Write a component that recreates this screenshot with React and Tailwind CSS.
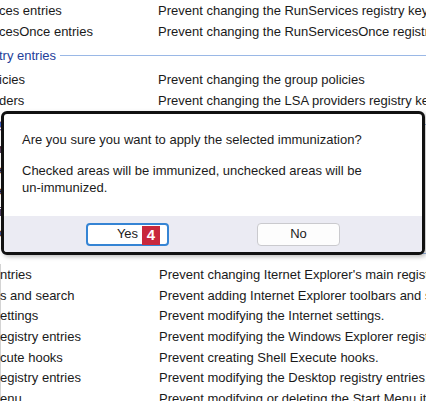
import React from "react";

const top = [
  ["ces entries", "Prevent changing the RunServices registry key"],
  ["cesOnce entries", "Prevent changing the RunServicesOnce registry key"],
];

const mid = [
  ["icies", "Prevent changing the group policies"],
  ["ders", "Prevent changing the LSA providers registry key"],
];

const hidden = [
  ["rs", "Prevent changing the Winlogon registry key"],
  ["es", "Prevent changing the Shell registry key"],
  ["ers", "Prevent changing the Userinit registry key"],
  ["ies", "Prevent changing the AppInit registry key"],
  ["ons", "Prevent changing the file associations"],
];

const bottom = [
  ["ntries", "Prevent changing Iternet Explorer's main registry entries"],
  ["s and search", "Prevent adding Internet Explorer toolbars and search providers"],
  ["ettings", "Prevent modifying the Internet settings."],
  ["egistry entries", "Prevent modifying the Windows Explorer registry entries."],
  ["cute hooks", "Prevent creating Shell Execute hooks."],
  ["egistry entries", "Prevent modifying the Desktop registry entries."],
  ["enu", "Prevent modifying or deleting the Start Menu items."],
];

function Row({ left, right, h = "h-[21px]" }) {
  return (
    <div className={`grid grid-cols-[158px_1fr] ${h} pt-px items-center whitespace-nowrap text-[13px] text-[#1a1a1a]`}>
      <span className="-ml-px overflow-hidden">{left}</span>
      <span>{right}</span>
    </div>
  );
}

function Header({ text, h = "h-[27px]" }) {
  return (
    <div className={`flex ${h} items-center gap-1 whitespace-nowrap text-[13px] text-[#23409a]`}>
      <span className="-ml-px">{text}</span>
      <div className="h-px flex-1 bg-[#9ab8e6]" />
    </div>
  );
}

export default function App() {
  return (
    <div className="relative w-[426px] h-[401px] overflow-hidden bg-white font-['Liberation_Sans',Arial,sans-serif]">
      <div className="flex flex-col">
        {top.map(([l, r], i) => (
          <Row key={"t" + i} left={l} right={r} />
        ))}
        <Header text="try entries" h="h-[26.5px]" />
        {mid.map(([l, r], i) => (
          <Row key={"m" + i} left={l} right={r} />
        ))}
        <Header text="gs entries" />
        {hidden.map(([l, r], i) => (
          <Row key={"h" + i} left={l} right={r} />
        ))}
        <Header text="" h="h-[21.5px]" />
        <div className="flex flex-col border-l border-[#d4d4d4]">
          {bottom.map(([l, r], i) => (
            <Row key={"b" + i} left={l} right={r} h="h-[20.67px]" />
          ))}
        </div>
      </div>

      <div className="absolute left-[1px] top-[111px] flex h-[144px] w-[424px] flex-col overflow-hidden rounded-[6px] border-[3px] border-[#111] bg-white shadow-[2px_2px_4px_rgba(0,0,0,0.25)]">
        <div className="flex-1 px-[18px] pt-[17px] text-[13px] leading-[17px] text-[#1b1b1b]">
          <p>Are you sure you want to apply the selected immunization?</p>
          <p className="mt-[15px] leading-[16.6px]">
            Checked areas will be immunized, unchecked areas will be
            <br />
            un-immunized.
          </p>
        </div>
        <div className="flex h-[36px] items-start justify-center gap-[88px] bg-[#ebebf3] pt-[6.5px]">
          <button className="relative flex h-[23px] w-[83px] items-center justify-center rounded-[4px] border-2 border-[#3584d4] bg-white text-[13px] text-[#1b1b1b]">
            Yes
            <span className="absolute left-[54px] top-[1px] flex h-[19px] w-[18px] items-center justify-center bg-[#c8283c] text-[15px] font-bold text-white">
              4
            </span>
          </button>
          <button className="flex h-[23px] w-[83px] items-center justify-center rounded-[4px] border border-[#cacace] bg-[#fdfdfd] text-[13px] text-[#1b1b1b]">
            No
          </button>
        </div>
      </div>
    </div>
  );
}
